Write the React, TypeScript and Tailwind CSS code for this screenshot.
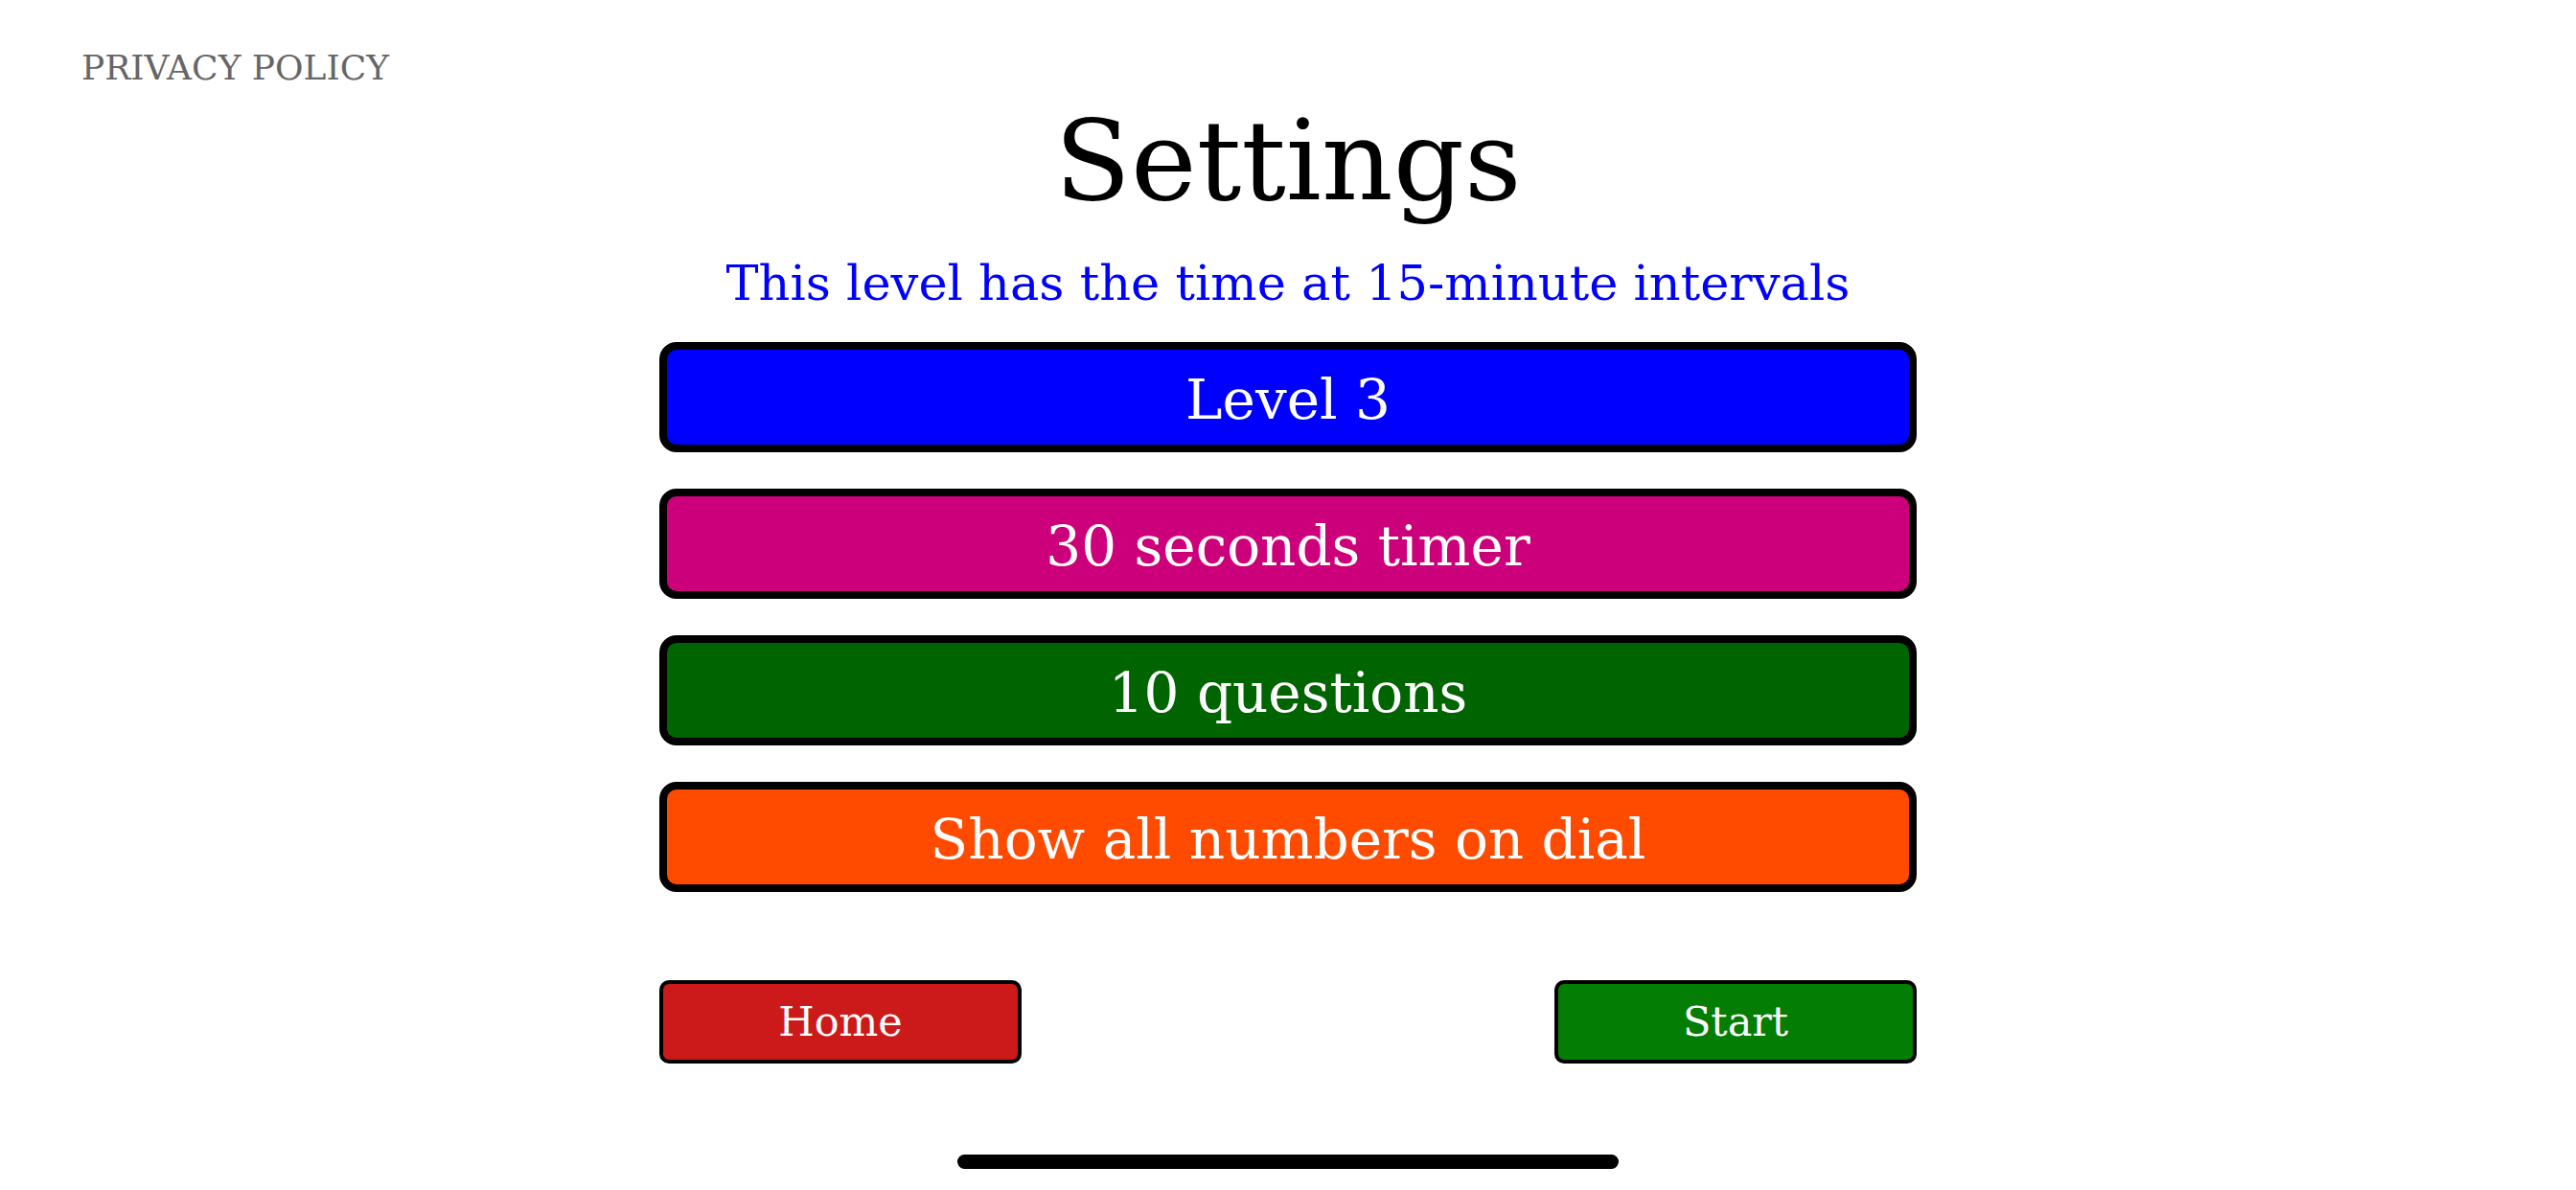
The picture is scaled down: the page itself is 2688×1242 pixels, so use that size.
const font = { fontFamily: '"DejaVu Serif", "Liberation Serif", serif' };

const settings = [
  { label: 'Level 3', bg: 'bg-[#0000ff]' },
  { label: '30 seconds timer', bg: 'bg-[#cc007a]' },
  { label: '10 questions', bg: 'bg-[#006400]' },
  { label: 'Show all numbers on dial', bg: 'bg-[#ff4b00]' },
];

export default function App() {
  return (
    <div className="w-[2688px] h-[1242px] bg-white flex flex-col overflow-hidden" style={font}>
      {/* Top link */}
      <div className="pt-[53px] pl-[85px] h-[89px]">
        <a className="text-[36px] leading-none text-[#666666] cursor-pointer">PRIVACY POLICY</a>
      </div>

      <div className="flex flex-col items-center">
        <h1 className="mt-[21px] text-[116px] leading-none text-black">Settings</h1>
        <p className="mt-[44px] text-[51px] leading-none text-[#0000ff]">
          This level has the time at 15-minute intervals
        </p>

        <div className="mt-[36px] w-[1312px] flex flex-col gap-[38px]">
          {settings.map((s) => (
            <button
              key={s.label}
              className={`h-[115px] w-full flex items-center justify-center pt-1 border-[8px] border-black rounded-[18px] text-white text-[58px] leading-none ${s.bg}`}
            >
              {s.label}
            </button>
          ))}
        </div>

        {/* Navigation */}
        <div className="mt-[92px] w-[1312px] flex justify-between">
          <button className="w-[378px] h-[87px] flex items-center justify-center border-[4px] border-black rounded-[10px] bg-[#cc1a1a] text-white text-[43px] leading-none">
            Home
          </button>
          <button className="w-[378px] h-[87px] flex items-center justify-center border-[4px] border-black rounded-[10px] bg-[#037d03] text-white text-[43px] leading-none">
            Start
          </button>
        </div>

        {/* Home indicator */}
        <div className="mt-[95px] w-[690px] h-[15px] rounded-full bg-black" />
      </div>
    </div>
  );
}
